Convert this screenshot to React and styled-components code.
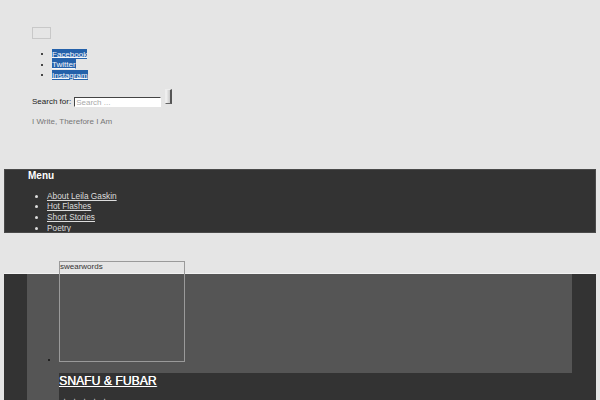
import React from "react";
import styled, { createGlobalStyle } from "styled-components";

const Global = createGlobalStyle`
  * { box-sizing: border-box; }
  html, body { margin: 0; padding: 0; background: #e5e5e5; }
  body { font-family: "Liberation Sans", Arial, sans-serif; font-size: 8px; line-height: 10.5px; color: #333; }
`;

const Page = styled.div`
  padding: 0 4px;
`;

const Header = styled.header`
  padding: 27px 0 0 28px;
`;

const ToggleButton = styled.button`
  display: block;
  width: 19px;
  height: 12px;
  padding: 0;
  margin: 0;
  background: transparent;
  border: 1px solid #c8c8c8;
`;

const SocialList = styled.ul`
  margin: 10px 0 0;
  padding-left: 20px;
  list-style: disc;
  color: #111;
`;

const SocialLink = styled.a`
  color: #f4f7fb;
  background: #2461aa;
  text-decoration: underline;
  padding: 0.5px 0;
`;

const SearchForm = styled.form`
  display: flex;
  align-items: flex-end;
  margin-top: 8.5px;
`;

const SearchLabel = styled.label`
  color: #222;
  margin-right: 3px;
  line-height: 10px;
`;

const SearchInput = styled.input`
  width: 87px;
  height: 10px;
  padding: 0 1px;
  margin: 0;
  border: 1px solid #fff;
  border-top: 1px solid #444;
  border-left: 1px solid #444;
  background: #fff;
  font-family: "Liberation Sans", Arial, sans-serif;
  font-size: 8px;
  color: #333;
  &::placeholder { color: #aaa; }
`;

const SearchButton = styled.button`
  width: 7px;
  height: 15px;
  padding: 0;
  margin: 0 0 3px 4px;
  border: 1px solid #eee;
  border-right: 2px solid #555;
  border-bottom: 1px solid #666;
  background: linear-gradient(to right, #f4f4f4, #c9c9c9);
`;

const Tagline = styled.p`
  margin: 10px 0 0;
  color: #777;
`;

const MenuBar = styled.nav`
  margin-top: 41px;
  height: 64px;
  overflow: hidden;
  background: #333;
  border: 1px solid #4a4a4a;
  padding-left: 23px;
`;

const MenuTitle = styled.div`
  color: #fff;
  font-weight: bold;
  font-size: 10px;
  line-height: 11px;
`;

const MenuList = styled.ul`
  margin: 10px 0 0;
  padding-left: 19px;
  list-style: disc;
  color: #ddd;
  font-size: 8.3px;
  line-height: 10.7px;
`;

const MenuLink = styled.a`
  color: #ddd;
  text-decoration: underline;
`;

const Section = styled.section`
  margin-top: 40px;
  border-top: 1px solid #f2f2f2;
  background: #333;
  padding: 0 24px 0 23px;
  height: 200px;
`;

const Inner = styled.div`
  display: flow-root;
  background: #555;
  height: 100%;
`;

const PostList = styled.ul`
  margin: -13px 0 0;
  padding-left: 32px;
  list-style: disc;
  color: #111;
`;

const PostItem = styled.li``;

const Thumb = styled.span`
  display: inline-block;
  overflow: hidden;
  width: 126px;
  height: 101px;
  border: 1px solid #9a9a9a;
  padding: 0;
  color: #333;
  font-size: 8px;
  line-height: 10px;
  vertical-align: baseline;
`;

const PostBody = styled.div`
  margin-top: 8px;
  background: #333;
  padding-top: 1px;
  height: 60px;
`;

const PostTitle = styled.h2`
  margin: 0;
  font-size: 12.2px;
  line-height: 15px;
  font-weight: normal;
  a { color: #fff; text-decoration: underline; text-shadow: 0.3px 0 0 #fff; }
`;

const Rating = styled.div`
  margin-top: 8px;
  color: #ccc;
  font-size: 8px;
  letter-spacing: 3px;
  padding-left: 2px;
`;

export default function App() {
  return (
    <>
      <Global />
      <Page>
        <Header>
          <ToggleButton aria-label="toggle" />
          <SocialList>
            <li><SocialLink href="#">Facebook</SocialLink></li>
            <li><SocialLink href="#">Twitter</SocialLink></li>
            <li><SocialLink href="#">Instagram</SocialLink></li>
          </SocialList>
          <SearchForm onSubmit={(e) => e.preventDefault()}>
            <SearchLabel>Search for:</SearchLabel>
            <SearchInput placeholder="Search ..." />
            <SearchButton type="submit" aria-label="search" />
          </SearchForm>
          <Tagline>I Write, Therefore I Am</Tagline>
        </Header>
        <MenuBar>
          <MenuTitle>Menu</MenuTitle>
          <MenuList>
            <li><MenuLink href="#">About Leila Gaskin</MenuLink></li>
            <li><MenuLink href="#">Hot Flashes</MenuLink></li>
            <li><MenuLink href="#">Short Stories</MenuLink></li>
            <li><MenuLink href="#">Poetry</MenuLink></li>
          </MenuList>
        </MenuBar>
        <Section>
          <Inner>
            <PostList>
              <PostItem>
                <Thumb>swearwords</Thumb>
                <PostBody>
                  <PostTitle><a href="#">SNAFU &amp; FUBAR</a></PostTitle>
                  <Rating>★★★★★</Rating>
                </PostBody>
              </PostItem>
            </PostList>
          </Inner>
        </Section>
      </Page>
    </>
  );
}
